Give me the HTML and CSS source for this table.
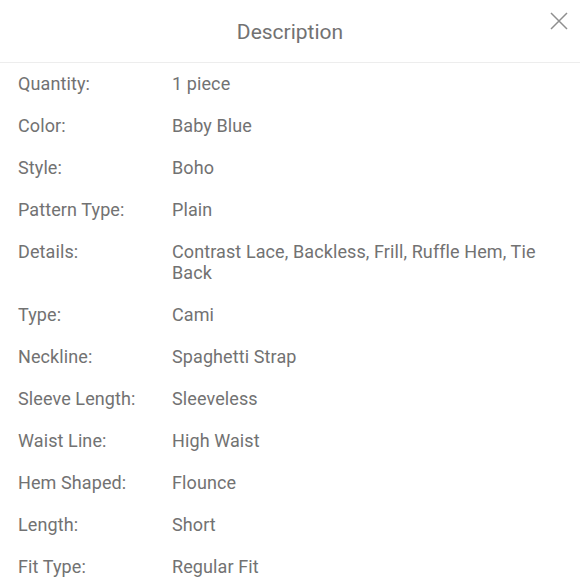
FILE: index.html
```html
<!DOCTYPE html>
<html>
<head>
<meta charset="utf-8">
<link rel="stylesheet" href="styles.css">
</head>
<body>
<div class="sheet">
  <header class="head">
    <h1 class="title">Description</h1>
    <button class="close" aria-label="Close">
      <svg width="20" height="20" viewBox="0 0 20 20"><path d="M2 2L18 18M18 2L2 18" stroke="#8f8f8f" stroke-width="1.5" fill="none"/></svg>
    </button>
  </header>
  <dl class="specs">
    <div class="row"><dt>Quantity:</dt><dd>1 piece</dd></div>
    <div class="row"><dt>Color:</dt><dd>Baby Blue</dd></div>
    <div class="row"><dt>Style:</dt><dd>Boho</dd></div>
    <div class="row"><dt>Pattern Type:</dt><dd>Plain</dd></div>
    <div class="row"><dt>Details:</dt><dd>Contrast Lace, Backless, Frill, Ruffle Hem, Tie Back</dd></div>
    <div class="row"><dt>Type:</dt><dd>Cami</dd></div>
    <div class="row"><dt>Neckline:</dt><dd>Spaghetti Strap</dd></div>
    <div class="row"><dt>Sleeve Length:</dt><dd>Sleeveless</dd></div>
    <div class="row"><dt>Waist Line:</dt><dd>High Waist</dd></div>
    <div class="row"><dt>Hem Shaped:</dt><dd>Flounce</dd></div>
    <div class="row"><dt>Length:</dt><dd>Short</dd></div>
    <div class="row"><dt>Fit Type:</dt><dd>Regular Fit</dd></div>
  </dl>
</div>
</body>
</html>
```
FILE: styles.css
```css
html, body { margin: 0; padding: 0; background: #fff; }
body { font-family: Roboto, "Noto Sans", sans-serif; color: #727272; overflow: hidden; }
.sheet { width: 580px; }
.head {
  position: relative;
  height: 62px;
  border-bottom: 1px solid #ededed;
  display: flex;
  align-items: center;
  justify-content: center;
}
.title { margin: 0; padding-top: 2px; font-size: 21px; font-weight: 400; color: #727272; }
.close {
  position: absolute;
  right: 11px;
  top: 11px;
  border: 0;
  background: none;
  padding: 0;
  width: 20px;
  height: 20px;
}
.specs { margin: 0; padding: 10px 18px 0; display: flex; flex-direction: column; gap: 21px; }
.row { display: flex; font-size: 18px; line-height: 21px; letter-spacing: 0.1px; }
.row dt { width: 154px; flex: none; }
.row dd { margin: 0; flex: 1; padding-right: 20px; }
```
